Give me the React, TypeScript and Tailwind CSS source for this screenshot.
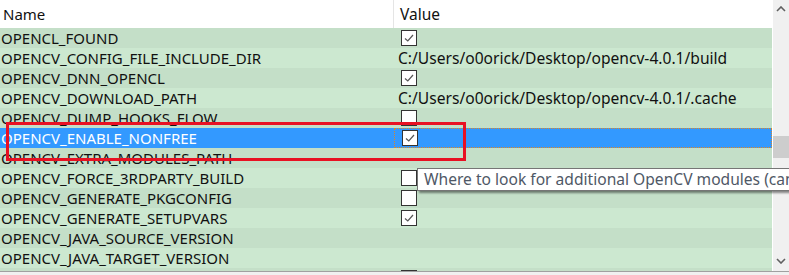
import React from "react";

type Row = { name: string; value?: string; check?: boolean };

const rows: Row[] = [
  { name: "OPENCL_FOUND", check: true },
  { name: "OPENCV_CONFIG_FILE_INCLUDE_DIR", value: "C:/Users/o0orick/Desktop/opencv-4.0.1/build" },
  { name: "OPENCV_DNN_OPENCL", check: true },
  { name: "OPENCV_DOWNLOAD_PATH", value: "C:/Users/o0orick/Desktop/opencv-4.0.1/.cache" },
  { name: "OPENCV_DUMP_HOOKS_FLOW", check: false },
  { name: "OPENCV_ENABLE_NONFREE", check: true },
  { name: "OPENCV_EXTRA_MODULES_PATH" },
  { name: "OPENCV_FORCE_3RDPARTY_BUILD", check: false },
  { name: "OPENCV_GENERATE_PKGCONFIG", check: false },
  { name: "OPENCV_GENERATE_SETUPVARS", check: true },
  { name: "OPENCV_JAVA_SOURCE_VERSION" },
  { name: "OPENCV_JAVA_TARGET_VERSION" },
  { name: "", check: false },
];

function Box({ checked }: { checked: boolean }) {
  return (
    <div className="w-[16px] h-[16px] border border-[#333333] bg-white flex items-center justify-center">
      {checked && (
        <svg width="12" height="12" viewBox="0 0 12 12">
          <path d="M2 6.5 L4.8 9 L10 3" fill="none" stroke="#555555" strokeWidth="1.2" />
        </svg>
      )}
    </div>
  );
}

export default function App() {
  return (
    <div
      className="relative w-[789px] h-[275px] overflow-hidden bg-[#f0f0f0] text-[15px] leading-[20px] text-[#111]"
      style={{ fontFamily: '"Noto Sans", "Open Sans", sans-serif' }}
    >
      <div className="flex h-[272px] border-b border-[#a0a0a0]">
        <div className="w-[772px] bg-white flex flex-col overflow-hidden">
          <div className="h-[28px] flex shrink-0 bg-white">
            <div className="w-[394px] border-r border-[#e5e5e5] pl-[3px] pt-[4px]">Name</div>
            <div className="flex-1 pl-[6px] pt-[4px] text-[15.5px]">Value</div>
          </div>
          {rows.map((r, i) => {
            const sel = i === 5;
            const bg = sel ? "bg-[#3399ff]" : i % 2 === 0 ? "bg-[#c4dfc8]" : "bg-[#cce8d0]";
            return (
              <div key={i} className={`h-[20px] shrink-0 flex ${bg}`}>
                <div className={`w-[394px] pl-[1px] whitespace-nowrap overflow-hidden ${sel ? "text-white" : ""}`}>
                  {r.name}
                </div>
                <div
                  className={`flex-1 flex items-center pl-[4px] whitespace-nowrap overflow-hidden text-[15.6px] ${
                    sel ? "border border-dotted border-[#d9862c]" : ""
                  }`}
                >
                  {r.check !== undefined ? (
                    <div className="pl-[3px]">
                      <Box checked={r.check} />
                    </div>
                  ) : (
                    <span>{r.value ?? ""}</span>
                  )}
                </div>
              </div>
            );
          })}
        </div>
        <div className="w-[1px] bg-white" />
        <div className="w-[16px] bg-[#f0f0f0] flex flex-col items-center">
          <div className="h-[17px] flex items-center justify-center">
            <svg width="10" height="6" viewBox="0 0 10 6">
              <path d="M1 5 L5 1 L9 5" fill="none" stroke="#606060" strokeWidth="1.6" />
            </svg>
          </div>
          <div className="h-[119px]" />
          <div className="w-full h-[22px] bg-[#cdcdcd]" />
          <div className="flex-1" />
          <div className="h-[20px] flex items-center justify-center">
            <svg width="10" height="6" viewBox="0 0 10 6">
              <path d="M1 1 L5 5 L9 1" fill="none" stroke="#606060" strokeWidth="1.6" />
            </svg>
          </div>
        </div>
      </div>

      {/* red annotation rectangle */}
      <div className="absolute left-[6px] top-[122px] w-[460px] h-[39px] border-[3px] border-[#e81123]" />

      {/* tooltip */}
      <div className="absolute left-[417px] top-[168px] h-[23px] bg-white border border-[#767676] shadow-[2px_2px_2px_rgba(0,0,0,0.45)] pl-[6px] pr-[8px] whitespace-nowrap text-[#4f5866] text-[15.6px] leading-[21px]">
        Where to look for additional OpenCV modules (can use multiple paths)
      </div>
    </div>
  );
}
